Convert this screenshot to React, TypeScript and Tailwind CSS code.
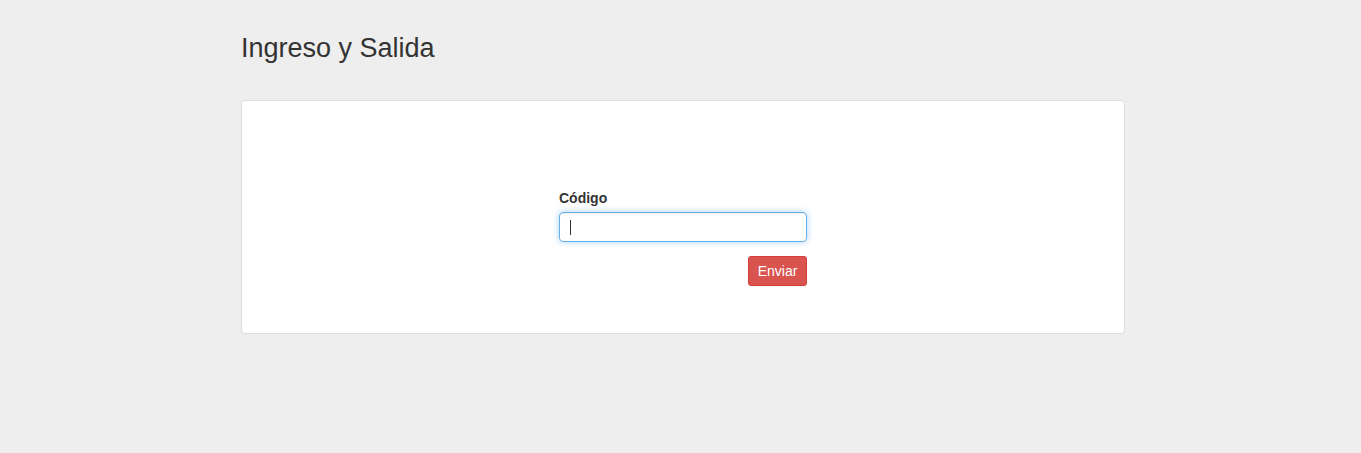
export default function App() {
  return (
    <div className="min-h-[453px] bg-[#eeeeee] font-['Liberation_Sans',Arial,sans-serif] text-[#333333]">
      <div className="ml-[241px] w-[884px] pt-[33px]">
        <h1 className="text-[27px] leading-[30px] font-normal">Ingreso y Salida</h1>

        <div className="mt-[37px] bg-white border border-[#dddddd] rounded-[4px] pt-[87px] pb-[47px]">
          <form className="mx-auto w-[248px] flex flex-col" onSubmit={(e) => e.preventDefault()}>
            <label htmlFor="codigo" className="block text-[14px] leading-[20px] font-bold mb-[4px]">
              Código
            </label>
            <div className="relative">
              <input
                id="codigo"
                type="text"
                className="w-full h-[30px] px-[12px] text-[14px] border border-[#66afe9] rounded-[4px] outline-none shadow-[inset_0_1px_1px_rgba(0,0,0,0.075),0_0_6px_rgba(102,175,233,0.6)]"
              />
              <span className="absolute left-[11px] top-[8px] w-px h-[15px] bg-[#333333]" />
            </div>
            <div className="flex justify-end mt-[14px]">
              <button
                type="submit"
                className="h-[30px] w-[59px] text-[14px] text-white bg-[#d9534f] border border-[#d43f3a] rounded-[3px]"
              >
                Enviar
              </button>
            </div>
          </form>
        </div>
      </div>
    </div>
  );
}
